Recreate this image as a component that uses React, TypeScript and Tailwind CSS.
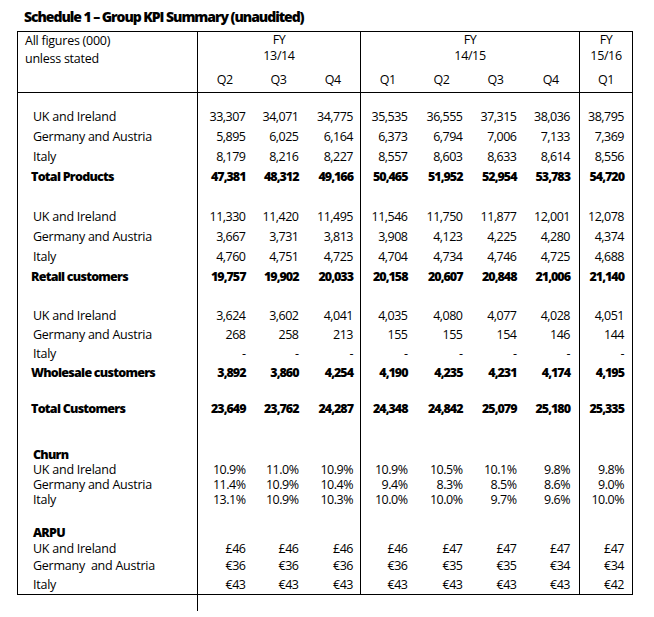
import React from "react";

type Row =
  | { kind: "spacer"; h: string }
  | { kind: "section"; label: string; h: string }
  | { kind: "data"; label: string; values: string[]; bold?: boolean; h: string };

// one padding per data column so figures line up like the printed schedule
const PR = ["pr-[6px]", "pr-[7px]", "pr-[7px]", "pr-[7px]", "pr-[6px]", "pr-[6px]", "pr-[9px]", "pr-[8px]"];
// group boundaries: FY13/14 | FY14/15 | FY15/16
const GROUP_START = [0, 3, 7];

const ROWS: Row[] = [
  { kind: "spacer", h: "h-[14px]" },
  { kind: "data", h: "h-[20px]", label: "UK and Ireland", values: ["33,307", "34,071", "34,775", "35,535", "36,555", "37,315", "38,036", "38,795"] },
  { kind: "data", h: "h-[20px]", label: "Germany and Austria", values: ["5,895", "6,025", "6,164", "6,373", "6,794", "7,006", "7,133", "7,369"] },
  { kind: "data", h: "h-[20px]", label: "Italy", values: ["8,179", "8,216", "8,227", "8,557", "8,603", "8,633", "8,614", "8,556"] },
  { kind: "data", h: "h-[20px]", label: "Total Products", bold: true, values: ["47,381", "48,312", "49,166", "50,465", "51,952", "52,954", "53,783", "54,720"] },
  { kind: "spacer", h: "h-[20px]" },
  { kind: "data", h: "h-[20px]", label: "UK and Ireland", values: ["11,330", "11,420", "11,495", "11,546", "11,750", "11,877", "12,001", "12,078"] },
  { kind: "data", h: "h-[20px]", label: "Germany and Austria", values: ["3,667", "3,731", "3,813", "3,908", "4,123", "4,225", "4,280", "4,374"] },
  { kind: "data", h: "h-[20px]", label: "Italy", values: ["4,760", "4,751", "4,725", "4,704", "4,734", "4,746", "4,725", "4,688"] },
  { kind: "data", h: "h-[20px]", label: "Retail customers", bold: true, values: ["19,757", "19,902", "20,033", "20,158", "20,607", "20,848", "21,006", "21,140"] },
  { kind: "spacer", h: "h-[20px]" },
  { kind: "data", h: "h-[19px]", label: "UK and Ireland", values: ["3,624", "3,602", "4,041", "4,035", "4,080", "4,077", "4,028", "4,051"] },
  { kind: "data", h: "h-[19px]", label: "Germany and Austria", values: ["268", "258", "213", "155", "155", "154", "146", "144"] },
  { kind: "data", h: "h-[19px]", label: "Italy", values: ["-", "-", "-", "-", "-", "-", "-", "-"] },
  { kind: "data", h: "h-[19px]", label: "Wholesale customers", bold: true, values: ["3,892", "3,860", "4,254", "4,190", "4,235", "4,231", "4,174", "4,195"] },
  { kind: "spacer", h: "h-[16px]" },
  { kind: "data", h: "h-[20px]", label: "Total Customers", bold: true, values: ["23,649", "23,762", "24,287", "24,348", "24,842", "25,079", "25,180", "25,335"] },
  { kind: "spacer", h: "h-[29px]" },
  { kind: "section", h: "h-[15px]", label: "Churn" },
  { kind: "data", h: "h-[15px]", label: "UK and Ireland", values: ["10.9%", "11.0%", "10.9%", "10.9%", "10.5%", "10.1%", "9.8%", "9.8%"] },
  { kind: "data", h: "h-[15px]", label: "Germany and Austria", values: ["11.4%", "10.9%", "10.4%", "9.4%", "8.3%", "8.5%", "8.6%", "9.0%"] },
  { kind: "data", h: "h-[15px]", label: "Italy", values: ["13.1%", "10.9%", "10.3%", "10.0%", "10.0%", "9.7%", "9.6%", "10.0%"] },
  { kind: "spacer", h: "h-[18px]" },
  { kind: "section", h: "h-[15px]", label: "ARPU" },
  { kind: "data", h: "h-[16px]", label: "UK and Ireland", values: ["£46", "£46", "£46", "£46", "£47", "£47", "£47", "£47"] },
  { kind: "data", h: "h-[19px]", label: "Germany\u00a0 and Austria", values: ["€36", "€36", "€36", "€36", "€35", "€35", "€34", "€34"] },
  { kind: "data", h: "h-[19px]", label: "Italy", values: ["€43", "€43", "€43", "€43", "€43", "€43", "€43", "€42"] },
];

const edge = (i: number) => (GROUP_START.includes(i) ? "border-l border-black" : "");

export default function App() {
  return (
    <div className="min-h-screen bg-white text-black pl-[17px] font-['Open_Sans','Noto_Sans',sans-serif]">
      <h1 className="pt-[8px] pl-[7px] mb-[5px] text-[14px] leading-[18px] font-extrabold tracking-[-0.075em]">
        Schedule 1 – Group KPI Summary (unaudited)
      </h1>

      <table className="table-fixed border-collapse border border-black w-[615px] text-[12.5px] leading-[14px]">
        <colgroup>
          <col className="w-[180px]" />
          <col className="w-[54px]" />
          <col className="w-[54px]" />
          <col className="w-[55px]" />
          <col className="w-[54px]" />
          <col className="w-[54px]" />
          <col className="w-[54px]" />
          <col className="w-[57px]" />
          <col className="w-[53px]" />
        </colgroup>
        <thead>
          <tr className="h-[37px]">
            <th rowSpan={2} className="align-top text-left font-normal pl-[7px] leading-[18px] tracking-[-0.02em] border-b border-black">
              All figures (000)
              <br />
              unless stated
            </th>
            <th colSpan={3} className="align-top font-normal leading-[16px] tracking-[-0.03em] border-l border-black">
              FY
              <br />
              13/14
            </th>
            <th colSpan={4} className="align-top font-normal leading-[16px] tracking-[-0.03em] border-l border-black">
              FY
              <br />
              14/15
            </th>
            <th className="align-top font-normal leading-[16px] tracking-[-0.03em] border-l border-black">
              FY
              <br />
              15/16
            </th>
          </tr>
          <tr className="h-[24px]">
            {["Q2", "Q3", "Q4", "Q1", "Q2", "Q3", "Q4", "Q1"].map((q, i) => (
              <th key={i} className={`font-normal text-center tracking-[-0.03em] border-b border-black ${edge(i)}`}>
                {q}
              </th>
            ))}
          </tr>
        </thead>
        <tbody>
          {ROWS.map((r, ri) => {
            if (r.kind === "spacer") {
              return (
                <tr key={ri} className={r.h}>
                  <td />
                  {PR.map((_, i) => (
                    <td key={i} className={edge(i)} />
                  ))}
                </tr>
              );
            }
            if (r.kind === "section") {
              return (
                <tr key={ri} className={r.h}>
                  <td className="pl-[15px] font-extrabold tracking-[-0.06em]">{r.label}</td>
                  {PR.map((_, i) => (
                    <td key={i} className={edge(i)} />
                  ))}
                </tr>
              );
            }
            return (
              <tr key={ri} className={r.h}>
                <td
                  className={`whitespace-nowrap ${
                    r.bold ? "pl-[13px] font-extrabold tracking-[-0.06em]" : "pl-[15px] tracking-[-0.02em]"
                  }`}
                >
                  {r.label}
                </td>
                {r.values.map((v, i) => (
                  <td
                    key={i}
                    className={`text-right whitespace-nowrap ${PR[i]} ${edge(i)} ${
                      r.bold ? "font-extrabold tracking-[-0.08em]" : "tracking-[-0.04em]"
                    }`}
                  >
                    {v}
                  </td>
                ))}
              </tr>
            );
          })}
        </tbody>
      </table>

      {/* the column rule runs on a little past the table */}
      <div className="ml-[180px] h-[16px] w-0 border-l border-black" />
    </div>
  );
}
